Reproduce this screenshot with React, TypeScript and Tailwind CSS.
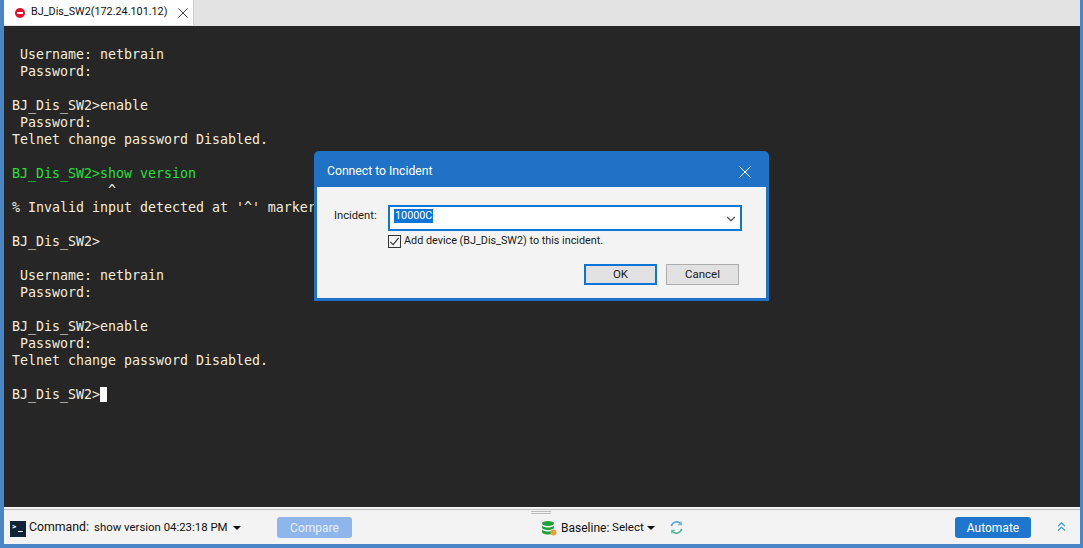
import React from "react";
import { LuChevronDown, LuChevronsUp } from "react-icons/lu";

type Line = { text: string; cls?: string };

const lines: Line[] = [
  { text: "" },
  { text: " Username: netbrain" },
  { text: " Password:" },
  { text: "" },
  { text: "BJ_Dis_SW2>enable" },
  { text: " Password:" },
  { text: "Telnet change password Disabled." },
  { text: "" },
  { text: "BJ_Dis_SW2>show version", cls: "text-[#22e03a]" },
  { text: "            ^" },
  { text: "% Invalid input detected at '^' marker." },
  { text: "" },
  { text: "BJ_Dis_SW2>" },
  { text: "" },
  { text: " Username: netbrain" },
  { text: " Password:" },
  { text: "" },
  { text: "BJ_Dis_SW2>enable" },
  { text: " Password:" },
  { text: "Telnet change password Disabled." },
  { text: "" },
];

const CloseX = ({ size, color }: { size: string; color: string }) => (
  <svg viewBox="0 0 12 12" className={size} fill="none" stroke={color} strokeWidth="1">
    <path d="M0.5 0.5 L11.5 11.5 M11.5 0.5 L0.5 11.5" />
  </svg>
);

const Terminal = () => (
  <div className="flex-1 bg-[#262626] pt-[3px] pl-[8px] font-['DejaVu_Sans_Mono',monospace] text-[13.29px] leading-[17px] text-[#f3ecdc] whitespace-pre overflow-hidden">
    {lines.map((l, i) => (
      <div key={i} className={`h-[17px] ${l.cls ?? ""}`}>
        {l.text}
      </div>
    ))}
    <div className="h-[17px] flex items-center">
      BJ_Dis_SW2&gt;
      <span className="inline-block w-[7px] h-[15px] bg-white" />
    </div>
  </div>
);

const Dialog = () => (
  <div className="absolute left-[314px] top-[151px] w-[455px] h-[150px] rounded-t-[5px] bg-[#1f72c6] p-[3px] pt-0 flex flex-col text-[10.8px] text-[#1a1a1a]">
    <div className="h-[36px] flex items-center justify-between pl-[10px] pr-[15px] pt-[5px] text-white text-[12.2px]">
      <span>Connect to Incident</span>
      <CloseX size="w-[12px] h-[12px]" color="#ffffff" />
    </div>
    <div className="flex-1 bg-[#f3f3f3] flex flex-col pt-[18px] pl-[17px] pr-[24px]">
      <div className="flex items-center">
        <span className="w-[54px] -mt-[4px] text-[11.2px]">Incident:</span>
        <div className="flex-1 h-[26px] bg-white border-2 border-[#0f78d4] flex items-center justify-between pl-[4px] pr-[2px] pb-[4px]">
          <span className="bg-[#0a74d9] text-white leading-[14px] px-[1px]">10000C</span>
          <LuChevronDown className="text-[14px] text-[#555] mt-[5px]" />
        </div>
      </div>
      <div className="flex items-center ml-[54px] mt-[3px] h-[14px]">
        <span className="w-[13px] h-[13px] shrink-0 border border-[#333] bg-[#f3f3f3] flex items-center justify-center mr-[3px]">
          <svg viewBox="0 0 12 12" className="w-[11px] h-[11px]" fill="none" stroke="#333" strokeWidth="1.2">
            <path d="M1.5 6.5 L4.5 9.5 L10.5 2" />
          </svg>
        </span>
        <span>Add device (BJ_Dis_SW2) to this incident.</span>
      </div>
      <div className="flex justify-end mt-[16px] gap-[9px] mr-[3px]">
        <button className="w-[73px] h-[21px] bg-[#e1e1e1] border-2 border-[#0a74d9] text-[11.5px]">OK</button>
        <button className="w-[73px] h-[21px] bg-[#e1e1e1] border border-[#adadad] text-[11.5px]">Cancel</button>
      </div>
    </div>
  </div>
);

const BottomBar = () => (
  <div className="h-[34px] pt-[1px] bg-[#f3f3f3] flex items-center text-[12px] text-[#111] relative">
    <div className="absolute left-[527px] top-[1px] w-[20px] h-[3px] border-y border-[#bbb]" />
    <div className="ml-[6px] w-[16px] h-[16px] shrink-0 bg-[#0f2438] relative mt-[2px]">
      <span className="absolute left-[2px] top-[1px] text-[8px] leading-[9px] text-white font-bold">&gt;</span>
      <span className="absolute left-[8px] top-[10px] w-[5px] h-[1px] bg-white" />
    </div>
    <span className="ml-[3px] w-[60px] shrink-0 whitespace-nowrap text-[12.3px]">Command:</span>
    <span className="ml-[5px] w-[134px] shrink-0 whitespace-nowrap text-[11.4px]">show version 04:23:18 PM</span>
    <span className="ml-[5px] w-0 h-0 border-x-[4px] border-x-transparent border-t-[4px] border-t-[#111]" />
    <button className="ml-[36px] w-[75px] h-[21px] rounded-[3px] bg-[#8fb5ed] text-[#e8eefb] text-[12px]">Compare</button>
    <svg viewBox="0 0 16 16" className="ml-[189px] w-[16px] h-[16px]">
      <ellipse cx="7" cy="3.5" rx="6" ry="2.5" fill="#1fa23a" />
      <path d="M1 5v2.5c0 1.4 2.7 2.5 6 2.5s6-1.100 6-2.500V5c0 1.400-2.700 2.500-6 2.500S1 6.400 1 5z" fill="#1fa23a" />
      <path d="M1 9v3c0 1.400 2.700 2.500 6 2.500s6-1.100 6-2.500V9c0 1.400-2.700 2.500-6 2.500S1 10.400 1 9z" fill="#1fa23a" />
      <circle cx="12.500" cy="12.500" r="3" fill="#f0a030" />
    </svg>
    <span className="ml-[4px] w-[46px] shrink-0 whitespace-nowrap">Baseline:</span>
    <span className="ml-[5px] w-[31px] shrink-0 whitespace-nowrap text-[11.6px]">Select</span>
    <span className="ml-[4px] w-0 h-0 border-x-[4px] border-x-transparent border-t-[4px] border-t-[#111]" />
    <svg viewBox="0 0 14 14" className="ml-[15px] w-[13px] h-[13px]" fill="none" strokeWidth="1.8">
      <path d="M1.500 5.500 A5.700 5.700 0 0 1 11.500 3" stroke="#5aa7e0" />
      <path d="M12.500 8.500 A5.700 5.700 0 0 1 2.500 11" stroke="#4fb89a" />
      <path d="M12 0.500 V4 H8.500" stroke="#5aa7e0" strokeWidth="1.200" />
      <path d="M2 13.500 V10 H5.500" stroke="#4fb89a" strokeWidth="1.200" />
    </svg>
    <button className="ml-auto mr-[49px] w-[76px] h-[21px] rounded-[3px] bg-[#1f76cf] text-white text-[12px]">Automate</button>
    <LuChevronsUp className="absolute right-[11px] top-[9px] text-[15px] text-[#3f9be8]" />
  </div>
);

const App = () => {
  return (
    <div className="relative w-[1083px] h-[548px] bg-[#4a86c5] pl-[4px] pr-[3px] pb-[4px] overflow-hidden font-['Roboto',sans-serif]">
      <div className="h-full flex flex-col bg-[#f3f3f3]">
        <div className="h-[26px] bg-[#e3e3e3] flex shrink-0">
          <div className="w-[190px] h-[25px] bg-white border-r border-[#ccc] flex items-center pl-[11px] text-[10.8px] text-[#111]">
            <span className="w-[10px] h-[10px] shrink-0 rounded-full bg-[#e2102a] flex items-center justify-center">
              <span className="w-[6px] h-[2px] bg-white" />
            </span>
            <span className="ml-[6px] w-[137px] shrink-0 whitespace-nowrap">BJ_Dis_SW2(172.24.101.12)</span>
            <span className="ml-[10px] shrink-0">
              <CloseX size="w-[10px] h-[10px]" color="#222222" />
            </span>
          </div>
        </div>
        <Terminal />
        <div className="h-[3px] bg-[#f3f3f3] border-b border-[#bdbdbd] shrink-0" />
        <BottomBar />
      </div>
      <Dialog />
    </div>
  );
};

export default App;
